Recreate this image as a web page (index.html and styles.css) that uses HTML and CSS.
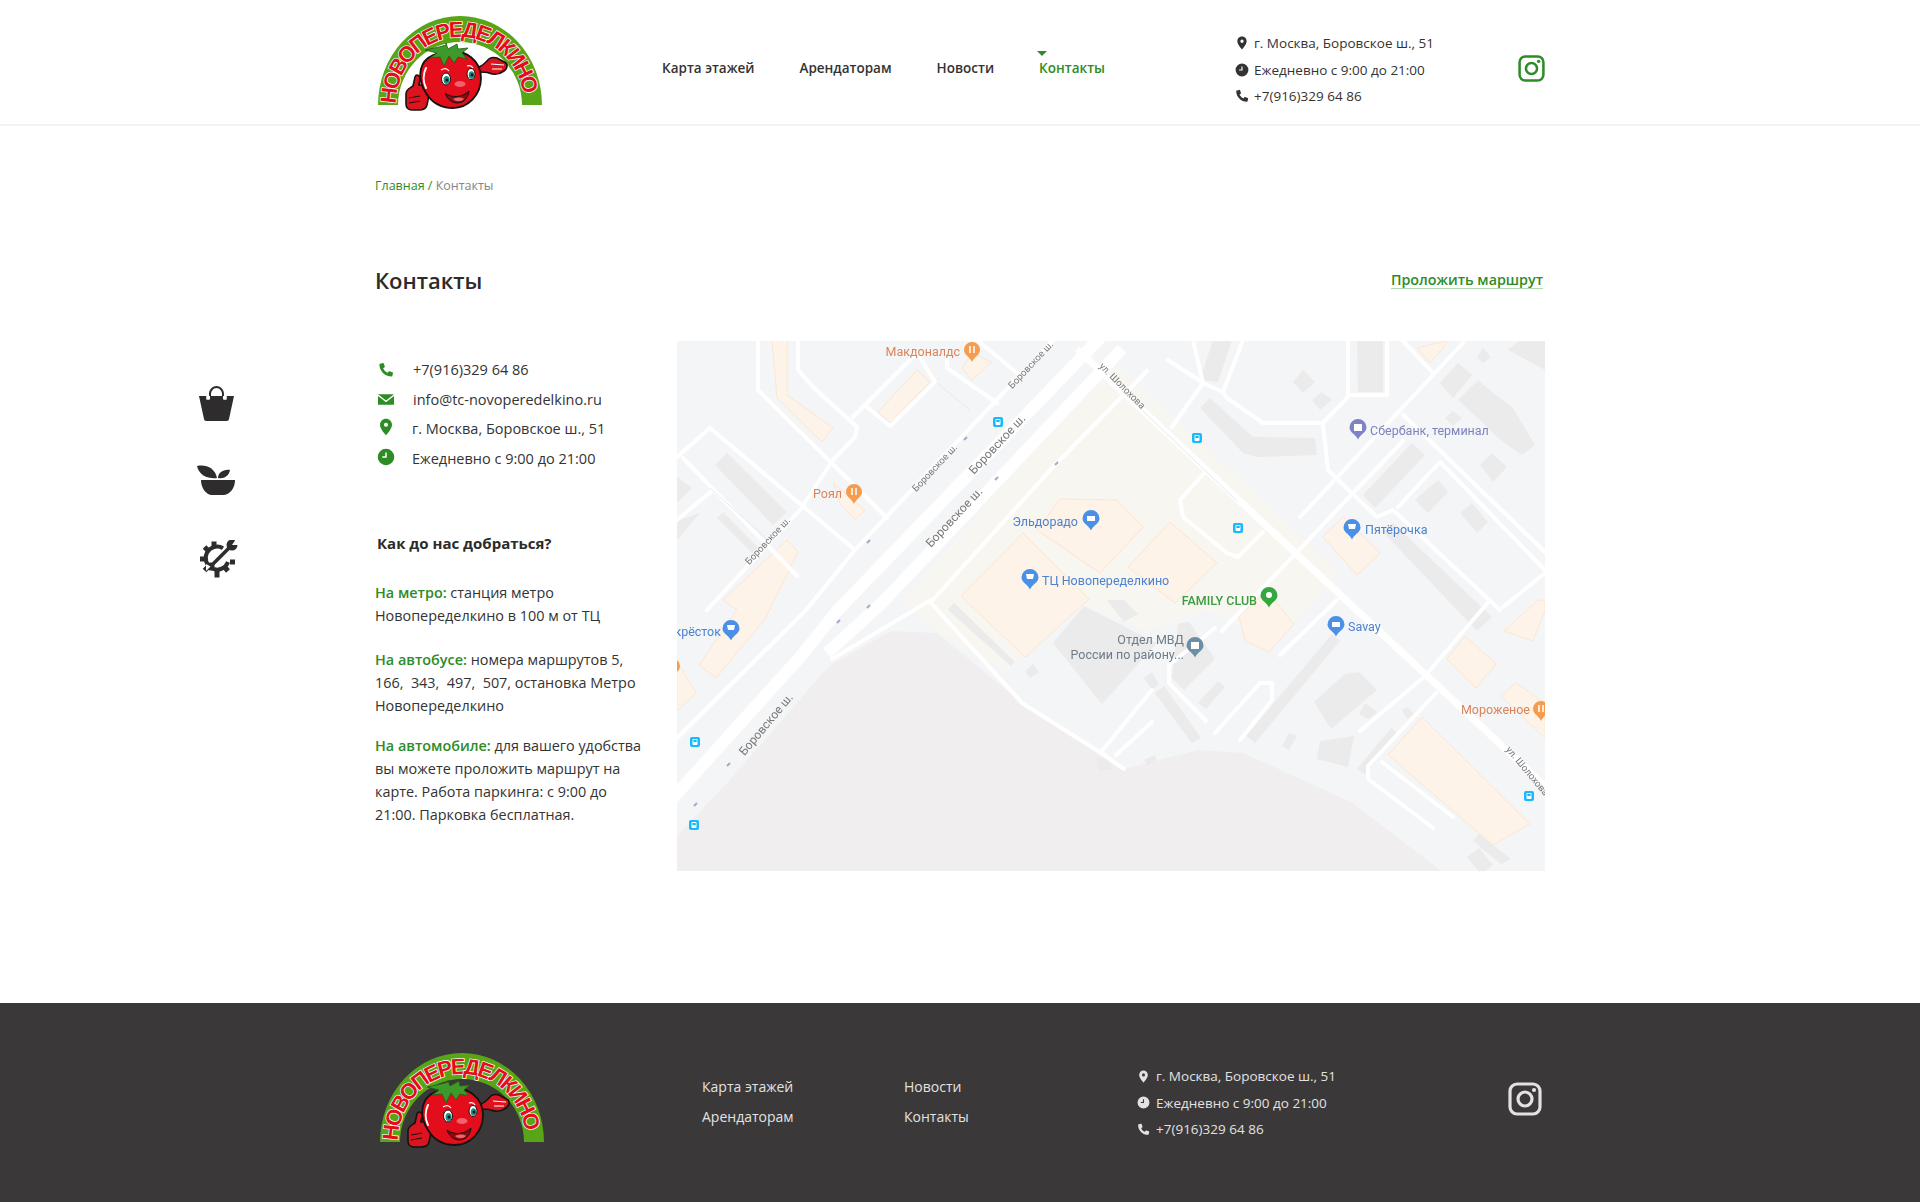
FILE: index.html
```html
<!DOCTYPE html>
<html lang="ru">

<head>
    <meta charset="UTF-8">
    <meta name="viewport" content="width=device-width, initial-scale=1.0">
    <title>Контакты - ТЦ Новопеределкино</title>
    <link rel="stylesheet" href="styles.css">
</head>

<body>
    <!-- ICONS -->
    <svg class="sprite" xmlns="http://www.w3.org/2000/svg">
        <symbol id="i-pin" viewBox="0 0 24 24">
            <path d="M12 1C7.6 1 4 4.6 4 9c0 5.900 8 14 8 14s8-8.100 8-14c0-4.400-3.600-8-8-8zm0 10.800a2.800 2.800 0 1 1 0-5.600 2.800 2.800 0 0 1 0 5.600z" />
        </symbol>
        <symbol id="i-clock" viewBox="0 0 24 24">
            <path fill-rule="evenodd" d="M12 1a11 11 0 1 0 0 22 11 11 0 0 0 0-22zm1 5h-2v5H7v2h6z" />
        </symbol>
        <symbol id="i-phone" viewBox="0 0 24 24">
            <path d="M3 2.500 7.500 1.500c.6-.1 1 .2 1.200.7l1.500 4.500c.2.500 0 1-.4 1.300L7.700 9.500c1.300 3 3.800 5.500 6.800 6.800l1.500-2.100c.3-.4.800-.6 1.300-.4l4.500 1.500c.5.200.8.600.7 1.200L21.500 21c-.1.500-.5.900-1 .9C10.300 21.900 2.100 13.700 2.100 3.500c0-.5.400-.9.900-1z" />
        </symbol>
        <symbol id="i-mail" viewBox="0 0 24 16">
            <path d="M0 0h24L12 9.500z" />
            <path d="M0 2.800V16h24V2.800L12 12.300z" />
        </symbol>
        <symbol id="i-insta" viewBox="0 0 34 34">
            <rect x="2" y="2" width="30" height="30" rx="7" fill="none" stroke="currentColor" stroke-width="3.200" />
            <circle cx="17" cy="17" r="7" fill="none" stroke="currentColor" stroke-width="3.200" />
            <circle cx="26" cy="8" r="2.100" fill="currentColor" />
        </symbol>
        <symbol id="logo" viewBox="0 0 170 98">
            <path d="M3 91A82 89 0 0 1 167 91H147A62 63 0 0 0 23 91z" fill="#58a618" />
            <path id="logo-arc" d="M21 90A64 67 0 0 1 149 90" fill="none" />
            <text class="logo-name" textLength="196" lengthAdjust="spacing"><textPath href="#logo-arc">НОВОПЕРЕДЕЛКИНО</textPath></text>
            <!-- thumb -->
            <path d="M31 80c0-5 4-6 7-8l2-9c1-3 5-2 5 1l-1 7h6c4 0 5 5 4 10l-2 10c-1 4-4 5-8 5h-7c-4 0-6-3-6-6z" fill="#dc1420" stroke="#15120f" stroke-width="1.600" />
            <path d="M34 84l11-2M34 89l11-2" stroke="#15120f" stroke-width="1" />
            <!-- right arm -->
            <path d="M104 53c3-1 5-3 8-6 2-3 6-4 10-3l9 5c2 2 1 6-2 8-4 3-10 4-15 2-3-1-7-1-10-1z" fill="#dc1420" stroke="#15120f" stroke-width="1.600" />
            <path d="M116 50l13 1M117 55l10 0" stroke="#fff" stroke-width="1" />
            <!-- body -->
            <path d="M74 38c17-3 32 9 32 26 0 17-13 30-28 30-12 0-21-5-27-15-8-12-8-27 2-35 6-4 14-6 21-6z" fill="#e30d1b" stroke="#15120f" stroke-width="1.800" />
            <path d="M51 54c-3 6-3 14 0 20" fill="none" stroke="#fff" stroke-width="2" stroke-linecap="round" />
            <!-- face -->
            <ellipse cx="71" cy="65" rx="4.500" ry="6" fill="#fff" stroke="#15120f" />
            <ellipse cx="71.500" cy="66" rx="3" ry="4" fill="#1f8f86" />
            <circle cx="72" cy="66" r="1.500" fill="#111" />
            <ellipse cx="96" cy="60" rx="4" ry="5.500" fill="#fff" stroke="#15120f" />
            <ellipse cx="96.500" cy="61" rx="2.800" ry="3.800" fill="#1f8f86" />
            <circle cx="97" cy="61" r="1.400" fill="#111" />
            <path d="M66 56c3-2 6-2 8 1M92 52c3-1 5 0 6 2" fill="none" stroke="#fff" stroke-width="1.200" />
            <ellipse cx="85" cy="70" rx="5.500" ry="3" fill="#f0626c" />
            <path d="M70 79c6 5 17 5 24-2-1 8-6 12-12 12-5 0-10-4-12-10z" fill="#8c0a12" stroke="#15120f" />
            <path d="M78 85c4-2 9-2 11 0-3 3-8 3-11 0z" fill="#f0626c" />
            <!-- leaves -->
            <path d="M71 29l2 6 9-5 1 5 10-1-6 5 5 6-9-2-4 6-5-7-5 10-4-9-10 1 7-5-12-3 14-3 7-2z" fill="#3e9a28" stroke="#245a16" stroke-width=".800" />
        </symbol>
        <symbol id="i-bus" viewBox="0 0 10 10">
            <rect width="10" height="10" rx="2" fill="#18b9ff" />
            <rect x="2.500" y="2" width="5" height="6" rx="1" fill="#fff" />
            <rect x="3.300" y="3" width="3.400" height="2" fill="#18b9ff" />
        </symbol>
    </svg>

    <header class="header">
        <div class="wrap header-row">
            <svg class="logo"><use href="#logo" /></svg>
            <nav class="menu">
                <a href="#">Карта этажей</a>
                <a href="#">Арендаторам</a>
                <a href="#">Новости</a>
                <a href="#" class="active">Контакты</a>
            </nav>
            <ul class="info">
                <li><svg class="ico"><use href="#i-pin" /></svg>г. Москва, Боровское ш., 51</li>
                <li><svg class="ico"><use href="#i-clock" /></svg>Ежедневно с 9:00 до 21:00</li>
                <li><svg class="ico"><use href="#i-phone" /></svg>+7(916)329 64 86</li>
            </ul>
            <a href="#" class="insta"><svg><use href="#i-insta" /></svg></a>
        </div>
    </header>

    <main>
        <div class="wrap">
            <div class="crumbs"><a href="#">Главная /</a> Контакты</div>
            <div class="title-row">
                <h1>Контакты</h1>
                <a href="#" class="route">Проложить маршрут</a>
            </div>
        </div>

        <div class="contacts">
            <div class="side">
                <a href="#" class="side-bag">
                    <svg viewBox="0 0 37 37">
                        <path d="M1 12h7.500v3.500h2.500V10c0-4 3-8 7.500-8S26 6 26 10v5.500h2.500V12H36l-5 23c-.2 1-1 2-2.500 2h-20C7 37 6.200 36 6 35z" />
                        <path d="M13 12v-2c0-3 2.500-6 5.500-6s5.500 3 5.500 6v2z" fill="#fff" />
                        <path d="M8.500 12H12v3.500H8.500zM25 12h3.500v3.500H25z" fill="#fff" />
                    </svg>
                </a>
                <a href="#" class="side-bowl">
                    <svg viewBox="0 0 38 30">
                        <path d="M4 15h34c0 8-5 15-12 15H15C9 30 4 23 4 15z" />
                        <path d="M0 1c9-2 18 2 20 12C12 14 2 11 0 1z" />
                        <path d="M21 13c0-5 5-9 12-8-1 6-6 9-12 8z" />
                    </svg>
                </a>
                <a href="#" class="side-gear">
                    <svg viewBox="0 0 40 39">
                        <path class="gear-line" stroke-width="4" d="M24 8.200A11.500 11.500 0 1 0 29 22" />
                        <path class="gear-line" stroke-width="5" d="M15 1.500V6M5.500 7l3.500 3.500M1 19H6M5.500 30.500 9 27M18 37.500V31M29 31l-3-3.500M36 22H31" />
                        <path class="gear-cut" stroke-width="7" d="M13 25 31 7" />
                        <path class="gear-line" stroke-width="3.500" d="M13 25 31 7" />
                        <circle cx="33" cy="5" r="5.500" />
                        <circle cx="11.500" cy="26.500" r="4" />
                        <path d="M33 5 37 -1 41 5z" fill="#fff" />
                        <path d="M11.500 26.500 7 31 7 24z" fill="#fff" />
                    </svg>
                </a>
            </div>

            <div class="details">
                <ul class="contact-list">
                    <li><svg class="ico"><use href="#i-phone" /></svg>+7(916)329 64 86</li>
                    <li><svg class="ico ico-mail"><use href="#i-mail" /></svg>info@tc-novoperedelkino.ru</li>
                    <li><svg class="ico ico-pin"><use href="#i-pin" /></svg>г. Москва, Боровское ш., 51</li>
                    <li><svg class="ico ico-pin"><use href="#i-clock" /></svg>Ежедневно с 9:00 до 21:00</li>
                </ul>
                <h3>Как до нас добраться?</h3>
                <p class="p-metro"><b>На метро:</b> станция метро Новопеределкино в 100 м от ТЦ</p>
                <p class="p-bus"><b>На автобусе:</b> номера маршрутов 5, 166,&nbsp; 343,&nbsp; 497,&nbsp; 507, остановка Метро Новопеределкино</p>
                <p class="p-car"><b>На автомобиле:</b> для вашего удобства вы можете проложить маршрут на карте. Работа паркинга: с 9:00 до 21:00. Парковка бесплатная.</p>
            </div>

            <svg class="map" viewBox="0 0 868 530" xmlns="http://www.w3.org/2000/svg">
                <rect width="868" height="530" fill="#f4f5f7" />
                <polygon class="m-land" points="0,495 50,442 152,325 214,290 260,292 345,362 424,414 447,428 521,409 566,412 674,461 776,539 0,539" />
                <polygon class="m-beige" points="435,18 662,232 600,300 530,270 470,290 405,262 330,330 262,292 225,262" />

                <!-- shops -->
                <g class="m-shop">
                    <polygon points="346,192 412,258 348,316 284,255" />
                    <polygon points="383,158 440,159 466,186 423,232 360,189" />
                    <polygon points="493,181 540,222 498,262 451,226" />
                    <polygon points="590,250 617,283 592,311 568,300 562,275" />
                    <polygon points="666,176 703,212 680,234 646,196" />
                    <polygon points="295,12 315,21 295,39 285,27" />
                    <polygon points="240,29 253,41 213,82 201,71" />
                    <polygon points="95,-1 110,-1 110,54 156,87 145,101 100,57" />
                    <polygon points="156,142 188,169 178,179 163,162" />
                    <polygon points="110,199 121,211 88,278 39,337 22,324 60,269 46,259" />
                    <polygon points="0,320 19,352 0,370" />
                    <polygon points="745,376 853,483 816,504 711,414" />
                    <polygon points="788,295 819,323 799,347 770,318" />
                    <polygon points="839,342 868,362 868,397 824,355" />
                    <polygon points="740,7 773,-1 753,22" />
                    <polygon points="827,290 861,259 868,259 868,270 856,300" />
                </g>

                <!-- buildings -->
                <g class="m-house">
                    <polygon points="38,124 50,112 110,171 96,184" />
                    <polygon points="40,177 46,171 81,206 75,212" />
                    <polygon points="0,136 15,147 0,162" />
                    <polygon points="23,172 0,199 0,180" />
                    <polygon points="523,67 533,57 576,96 638,97 640,114 580,116 566,112" />
                    <polygon points="616,41 626,29 638,41 626,52" />
                    <polygon points="635,59 645,51 655,59 643,69" />
                    <polygon points="523,39 536,-1 555,-1 541,41" />
                    <polygon points="680,-1 706,-1 706,51 681,51" />
                    <polygon points="763,42 781,22 795,34 776,57" />
                    <polygon points="781,59 801,39 815,51 836,67 858,104 845,114 826,101" />
                    <polygon points="800,16 806,7 814,16 806,22" />
                    <polygon points="831,9 843,-1 868,-1 868,29" />
                    <polygon points="768,77 776,70 785,77 776,85" />
                    <polygon points="803,124 815,112 830,126 816,141" />
                    <polygon points="686,154 735,102 748,114 698,167" />
                    <polygon points="738,159 761,139 771,151 751,172" />
                    <polygon points="783,172 795,162 811,181 800,192" />
                    <polygon points="706,191 716,182 815,276 800,290" />
                    <polygon points="407,265 376,302 425,363 480,302" />
                    <polygon points="348,330 356,323 362,331 353,337" />
                    <polygon points="271,269 277,262 338,321 334,325" />
                    <polygon points="430,259 447,259 461,273 447,281" />
                    <polygon points="478,352 487,345 524,397 515,402" />
                    <polygon points="467,337 475,331 482,343 475,349" />
                    <polygon points="501,283 512,281 538,318 507,349 495,337" />
                    <polygon points="541,340 521,362 529,368 548,346" />
                    <polygon points="655,293 663,300 578,402 569,395" />
                    <polygon points="637,361 668,333 682,331 700,349 654,388" />
                    <polygon points="682,373 688,362 700,371 692,378" />
                    <polygon points="643,400 677,395 671,426 640,418" />
                    <polygon points="612,392 620,395 612,409 605,405" />
                    <polygon points="714,387 720,392 688,433 680,428" />
                    <polygon points="725,369 731,366 737,373 730,378" />
                    <polygon points="802,493 834,518 824,523 796,500" />
                    <polygon points="790,516 802,507 816,524 804,533" />
                    <polygon points="419,418 430,416 436,428 422,430" />
                    <polygon points="467,419 478,414 480,419 470,424" />
                </g>

                <!-- roads -->
                <g class="m-road">
                    <path d="M81-1V49L210 177" />
                    <path d="M121-1V29L136 46 180 86 178 96 156 119 123 169 30 269" />
                    <path d="M0 116 33 87 178 209" />
                    <path d="M6 117 120 235" />
                    <path d="M36 149 0 179" />
                    <path d="M176 76 240 12 258 41 213 85 190 66" />
                    <path d="M270 16V27L320 62" />
                    <path d="M300-1 340 32" />
                    <path d="M0 397 129 269 178 209 380-5" />
                    <path d="M254 262 345 362 424 412 447 428" />
                    <path d="M253 262 376 126 470 30" />
                    <path d="M155 318 254 259" />
                    <path d="M530 129 503 159 506 176 550 212 561 216 586 191" />
                    <path d="M495 86 526 42 546 51 550 57 586 82 646 82 671 56V-1" />
                    <path d="M526 42 491 19M526 42 516-1M546 51 566-1" />
                    <path d="M671 54H710V-1" />
                    <path d="M646 84 651 129 661 139 700 176 716 169 823 269" />
                    <path d="M623 176 786 2" />
                    <path d="M545 290 676 152 726 100" />
                    <path d="M726 74 868 211" />
                    <path d="M721 166 763 121 868 229" />
                    <path d="M868 232 826 266" />
                    <path d="M756 32 725-1" />
                    <path d="M813 259 748 335 683 390" />
                    <path d="M759 352 691 425V438L756 487" />
                    <path d="M705 421 776 476" />
                    <path d="M660 259 603 314" />
                    <path d="M538 392 583 342H595V359L563 399" />
                    <path d="M475 349 424 411" />
                    <path d="M475 381 439 414" />
                    <path d="M538 287 492 324V342L529 380" />
                </g>
                <g class="m-street">
                    <path d="M400 8 868 445" />
                </g>
                <g class="m-highway">
                    <path d="M-5 458 124 315 160 270 425-5" />
                    <path d="M150 312 205 262 445 8" />
                </g>
                <g class="m-thin">
                    <path d="M260 42 293 69" />
                    <path d="M33 147 92 200" />
                    <path d="M445 50 560 160" />
                </g>
                <g class="m-arrow">
                    <path d="M290 96l-3 3M193 199l-3 3M318 139l3-3M378 124l3-3M160 282l3-3M190 267l3-3M17 465l3-3M50 425l3-3" />
                </g>

                <!-- labels -->
                <g class="m-label-road">
                    <text transform="translate(323 106) rotate(-47)" text-anchor="middle">Боровское ш.</text>
                    <text transform="translate(280 179) rotate(-47)" text-anchor="middle">Боровское ш.</text>
                    <text transform="translate(92 386) rotate(-50)" text-anchor="middle">Боровское ш.</text>
                    <text class="small" transform="translate(260 129) rotate(-47)" text-anchor="middle">Боровское ш.</text>
                    <text class="small" transform="translate(356 26) rotate(-47)" text-anchor="middle">Боровское ш.</text>
                    <text class="small" transform="translate(93 202) rotate(-47)" text-anchor="middle">Боровское ш.</text>
                    <text class="small" transform="translate(443 47) rotate(45)" text-anchor="middle">ул. Шолохова</text>
                    <text class="small" transform="translate(848 432) rotate(50)" text-anchor="middle">ул. Шолохова</text>
                </g>

                <use href="#i-bus" x="316" y="76" width="10" height="10" />
                <use href="#i-bus" x="515" y="92" width="10" height="10" />
                <use href="#i-bus" x="556" y="182" width="10" height="10" />
                <use href="#i-bus" x="13" y="396" width="10" height="10" />
                <use href="#i-bus" x="12" y="479" width="10" height="10" />
                <use href="#i-bus" x="847" y="450" width="10" height="10" />

                <g class="m-pin orange">
                    <path d="M295 1a8 8 0 0 1 8 8c0 5-6 7-8 12-2-5-8-7-8-12a8 8 0 0 1 8-8z" />
                    <path d="M177 143a8 8 0 0 1 8 8c0 5-6 7-8 12-2-5-8-7-8-12a8 8 0 0 1 8-8z" />
                    <path d="M864 360a8 8 0 0 1 8 8c0 5-6 7-8 12-2-5-8-7-8-12a8 8 0 0 1 8-8z" />
                    <circle cx="-4" cy="325" r="7" />
                </g>
                <g class="m-pin blue">
                    <path d="M414 169a8.500 8.500 0 0 1 8.500 8.500c0 5-6.500 7-8.500 12-2-5-8.500-7-8.500-12a8.500 8.500 0 0 1 8.500-8.500z" />
                    <path d="M353 228a8.500 8.500 0 0 1 8.500 8.500c0 5-6.500 7-8.500 12-2-5-8.500-7-8.500-12a8.500 8.500 0 0 1 8.500-8.500z" />
                    <path d="M675 178a8.500 8.500 0 0 1 8.500 8.500c0 5-6.500 7-8.500 12-2-5-8.500-7-8.500-12a8.500 8.500 0 0 1 8.500-8.500z" />
                    <path d="M659 275a8.500 8.500 0 0 1 8.500 8.500c0 5-6.500 7-8.500 12-2-5-8.500-7-8.500-12a8.500 8.500 0 0 1 8.500-8.500z" />
                    <path d="M54 279a8.500 8.500 0 0 1 8.500 8.500c0 5-6.500 7-8.500 12-2-5-8.500-7-8.500-12a8.500 8.500 0 0 1 8.500-8.500z" />
                </g>
                <g class="m-pin violet">
                    <path d="M681 78a8.500 8.500 0 0 1 8.500 8.500c0 5-6.500 7-8.500 12-2-5-8.500-7-8.500-12a8.500 8.500 0 0 1 8.500-8.500z" />
                </g>
                <g class="m-pin slate">
                    <path d="M518 296a8.500 8.500 0 0 1 8.500 8.500c0 5-6.500 7-8.500 12-2-5-8.500-7-8.500-12a8.500 8.500 0 0 1 8.500-8.500z" />
                </g>
                <g class="m-pin green">
                    <path d="M592 246a8.500 8.500 0 0 1 8.500 8.500c0 5-6.500 7-8.500 12-2-5-8.500-7-8.500-12a8.500 8.500 0 0 1 8.500-8.500z" />
                </g>
                <g class="m-pin-dot">
                    <circle cx="592" cy="254" r="3" />
                    <path d="M410 175h8v5h-8zM349 233h8l-1 5h-6zM671 183h8l-1 5h-6zM655 281h8v5h-8zM50 284h8l-1 5h-6zM677 83h8v7h-8zM514 301h8v7h-8z" />
                    <path class="pin-fork" d="M293 5v7M297 5v7M175 147v7M179 147v7M862 364v7M866 364v7" />
                </g>

                <text class="m-name orange" x="283" y="15" text-anchor="end">Макдоналдс</text>
                <text class="m-name orange" x="165" y="157" text-anchor="end">Роял</text>
                <text class="m-name orange" x="853" y="373" text-anchor="end">Мороженое</text>
                <text class="m-name blue" x="401" y="185" text-anchor="end">Эльдорадо</text>
                <text class="m-name blue" x="365" y="244">ТЦ Новопеределкино</text>
                <text class="m-name blue" x="688" y="193">Пятёрочка</text>
                <text class="m-name blue" x="671" y="290">Savay</text>
                <text class="m-name blue" x="44" y="295" text-anchor="end">Перекрёсток</text>
                <text class="m-name violet" x="693" y="94">Сбербанк, терминал</text>
                <text class="m-name green" x="580" y="264" text-anchor="end">FAMILY CLUB</text>
                <text class="m-name slate" x="507" y="303" text-anchor="end">Отдел МВД</text>
                <text class="m-name slate" x="507" y="318" text-anchor="end">России по району...</text>
            </svg>
        </div>
    </main>

    <footer class="footer">
        <div class="wrap footer-row">
            <svg class="logo"><use href="#logo" /></svg>
            <nav class="foot-menu">
                <a href="#">Карта этажей</a>
                <a href="#">Новости</a>
                <a href="#">Арендаторам</a>
                <a href="#">Контакты</a>
            </nav>
            <ul class="info">
                <li><svg class="ico"><use href="#i-pin" /></svg>г. Москва, Боровское ш., 51</li>
                <li><svg class="ico"><use href="#i-clock" /></svg>Ежедневно с 9:00 до 21:00</li>
                <li><svg class="ico"><use href="#i-phone" /></svg>+7(916)329 64 86</li>
            </ul>
            <a href="#" class="insta"><svg><use href="#i-insta" /></svg></a>
        </div>
    </footer>
</body>

</html>
```

FILE: styles.css
```css
* {
    box-sizing: border-box;
}

body {
    margin: 0;
    background: #fff;
    color: #333;
    font-family: "Open Sans", "Noto Sans", sans-serif;
    font-size: 15px;
}

a {
    color: inherit;
    text-decoration: none;
}

ul {
    list-style: none;
    margin: 0;
    padding: 0;
}

.sprite {
    position: absolute;
    width: 0;
    height: 0;
}

.wrap {
    width: 1170px;
    margin: 0 auto;
}

.ico {
    fill: currentColor;
}

/* header */
.header {
    height: 126px;
    border-bottom: 2px solid #f2f2f2;
}

.header-row {
    display: flex;
    align-items: flex-start;
    height: 124px;
}

.logo {
    display: block;
    width: 170px;
    height: 98px;
    flex: none;
}

.header .logo {
    margin-top: 14px;
}

.menu {
    display: flex;
    gap: 45px;
    margin: 58px 0 0 117px;
    font-size: 13.500px;
    font-weight: 600;
    line-height: 20px;
}

.menu a {
    position: relative;
}

.menu .active {
    color: #2d8c26;
    font-weight: 600;
}

.menu .active::before {
    content: "";
    position: absolute;
    left: -2px;
    top: -7px;
    border-left: 5px solid transparent;
    border-right: 5px solid transparent;
    border-top: 5px solid #2d8c26;
}

.info {
    font-size: 13.500px;
    line-height: 26.500px;
}

.info li {
    display: flex;
    align-items: center;
}

.info .ico {
    width: 14px;
    height: 14px;
    margin-right: 5px;
}

.header .info {
    margin: 30px 0 0 auto;
    width: 283px;
}

.insta {
    display: block;
    flex: none;
}

.insta svg {
    display: block;
    width: 100%;
    height: 100%;
}

.header .insta {
    width: 27px;
    height: 27px;
    margin-top: 55px;
    color: #2d8c26;
}

/* top of page */
.crumbs {
    padding-top: 51px;
    font-size: 12.500px;
    line-height: 18px;
    color: #858585;
}

.crumbs a {
    color: #2d8c26;
}

.title-row {
    display: flex;
    justify-content: space-between;
    align-items: center;
    margin-top: 65px;
    height: 40px;
}

h1 {
    margin: 0;
    font-size: 22px;
    font-weight: 600;
    color: #2b2b2b;
}

.route {
    margin-right: 2px;
    font-size: 14.300px;
    font-weight: 600;
    color: #2d8c26;
    border-bottom: 1px solid #b5d6b2;
    line-height: 16px;
}

/* contacts */
.contacts {
    display: grid;
    grid-template-columns: 375px 302px 868px;
    margin-top: 41px;
    height: 530px;
}

.side {
    display: flex;
    flex-direction: column;
    padding: 43px 0 0 198px;
    color: #2e2c2d;
}

.side svg {
    display: block;
    width: 100%;
    height: 100%;
    fill: currentColor;
}

.gear-line {
    fill: none;
    stroke: currentColor;
}

.gear-cut {
    fill: none;
    stroke: #fff;
}

.side-bag {
    width: 37px;
    height: 37px;
}

.side-bowl {
    width: 38px;
    height: 30px;
    margin: 44px 0 0 -1px;
}

.side-gear {
    width: 40px;
    height: 39px;
    margin: 45px 0 0 1px;
}

.details {
    padding-right: 27px;
}

.contact-list {
    padding-top: 14px;
    margin-left: 3px;
}

.contact-list li {
    display: flex;
    align-items: center;
    height: 29.500px;
    font-size: 14.500px;
}

.contact-list .ico {
    width: 16px;
    height: 16px;
    margin-right: 19px;
    color: #2d8c26;
}

.contact-list .ico-mail {
    height: 11px;
}

.contact-list .ico-pin {
    width: 18px;
    height: 18px;
    margin: -3px 17px 0 -1px;
}

.details h3 {
    margin: 60px 0 0 2px;
    font-size: 15px;
    font-weight: 700;
    line-height: 20px;
    color: #2b2b2b;
}

.details p {
    margin: 0;
    line-height: 23px;
    font-size: 14.400px;
}

.details b {
    font-weight: 600;
    color: #2d8c26;
}

.details .p-metro {
    margin-top: 28px;
}

.details .p-bus {
    margin-top: 21px;
}

.details .p-car {
    margin-top: 17px;
}

/* map */
.map {
    display: block;
    width: 868px;
    height: 530px;
    filter: blur(.4px);
}

.m-land { fill: #f0eeef; }
.m-beige { fill: #f8f6f0; }
.m-shop polygon { fill: #fdf3e8; stroke: #fbe6d2; stroke-width: 1; }
.m-house polygon { fill: #ebebec; }
.m-road path { fill: none; stroke: #fff; stroke-width: 4; stroke-linejoin: round; stroke-linecap: round; }
.m-street path { fill: none; stroke: #fff; stroke-width: 7; }
.m-highway path { fill: none; stroke: #fff; stroke-width: 12; stroke-linejoin: round; }
.m-thin path { fill: none; stroke: #e8e9ea; stroke-width: 1; }
.m-arrow path { fill: none; stroke: #a6a8cf; stroke-width: 2; }
.m-label-road text { font-size: 12px; fill: #777; font-family: Roboto, sans-serif; }
.m-label-road .small { font-size: 9.500px; }
.m-pin-dot { fill: #fff; }
.pin-fork { fill: none; stroke: #fff; stroke-width: 1.500; }
.m-pin.orange { fill: #f59c4f; }
.m-pin.blue { fill: #4a90e6; }
.m-pin.violet { fill: #7d83c4; }
.m-pin.slate { fill: #6e8ea3; }
.m-pin.green { fill: #34a83f; }
.m-name { font-family: Roboto, sans-serif; font-size: 12.500px; }
.m-name.orange { fill: #d9855c; }
.m-name.blue { fill: #4d82cf; }
.m-name.violet { fill: #7d83bc; }
.m-name.green { fill: #3c9c3f; font-weight: 500; }
.m-name.slate { fill: #6e7c88; }

/* logo */
.logo-name {
    font-family: "Liberation Sans Narrow", "Liberation Sans", sans-serif;
    font-size: 22px;
    font-weight: 700;
    fill: #e30d1b;
    stroke: #fff;
    stroke-width: 1.400px;
    paint-order: stroke;
}

/* footer */
.footer {
    margin-top: 132px;
    height: 199px;
    background: #3a3839;
    color: #e2e2e2;
}

.footer-row {
    display: flex;
    align-items: flex-start;
    height: 199px;
}

.footer .logo {
    margin: 48px 0 0 2px;
}

.foot-menu {
    display: grid;
    grid-template-columns: 202px 100px;
    row-gap: 10px;
    margin: 74px 0 0 155px;
    font-size: 14px;
    line-height: 20px;
}

.footer .info {
    margin: 60px 0 0 133px;
}

.footer .info .ico {
    width: 13px;
    height: 13px;
    margin-right: 6px;
}

.footer .insta {
    width: 34px;
    height: 34px;
    margin: 79px 3px 0 auto;
}
```
